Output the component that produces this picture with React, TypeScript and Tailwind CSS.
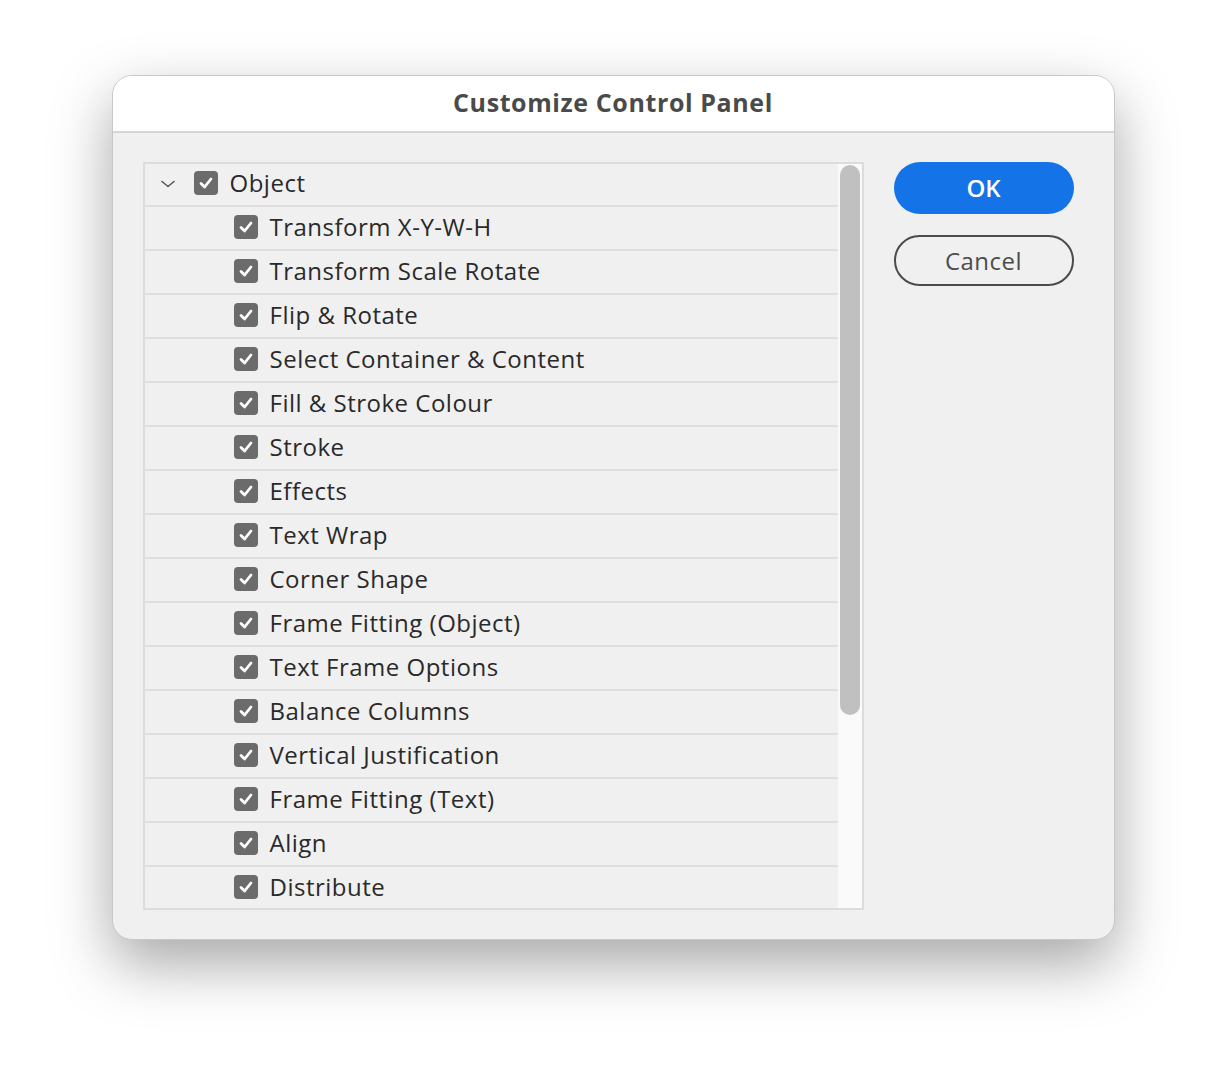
import React from 'react';

const items = [
  'Transform X-Y-W-H',
  'Transform Scale Rotate',
  'Flip & Rotate',
  'Select Container & Content',
  'Fill & Stroke Colour',
  'Stroke',
  'Effects',
  'Text Wrap',
  'Corner Shape',
  'Frame Fitting (Object)',
  'Text Frame Options',
  'Balance Columns',
  'Vertical Justification',
  'Frame Fitting (Text)',
  'Align',
  'Distribute',
];

const CheckBox: React.FC = () => (
  <span className="flex h-6 w-6 shrink-0 items-center justify-center rounded-[4px] bg-[#6b6b6b]">
    <svg width="18" height="18" viewBox="0 0 18 18" fill="none">
      <path d="M4 9.5 L7.6 13 L14 5" stroke="#fff" strokeWidth="2.8" strokeLinecap="round" strokeLinejoin="round" />
    </svg>
  </span>
);

const Row: React.FC<{ label: string; top?: boolean }> = ({ label, top }) => (
  <div className={`flex ${top ? 'h-[43px]' : 'h-[44px]'} items-center border-b-2 border-[#dedede] pb-[3px]`}>
    {top ? (
      <>
        <span className="ml-[15px] mr-[18px] flex w-4 justify-center pt-[2px]">
          <svg width="16" height="10" viewBox="0 0 16 10" fill="none">
            <path d="M2 2.5 L8 7.5 L14 2.5" stroke="#5a5a5a" strokeWidth="1.6" strokeLinecap="round" strokeLinejoin="round" />
          </svg>
        </span>
        <CheckBox />
        <span className="ml-3 text-[24px] tracking-[0.5px] text-[#2a2a2a]">{label}</span>
      </>
    ) : (
      <>
        <span className="ml-[89px]" />
        <CheckBox />
        <span className="ml-3 text-[24px] tracking-[0.5px] text-[#2a2a2a]">{label}</span>
      </>
    )}
  </div>
);

export default function App() {
  return (
    <div
      className="flex min-h-[1088px] w-full justify-center bg-white pt-[75px]"
      style={{ fontFamily: '"Open Sans", "Noto Sans", sans-serif' }}
    >
      <div className="flex h-[865px] w-[1003px] flex-col overflow-hidden rounded-[20px] border border-[#c8c8c8] bg-[#f0f0f0] shadow-[0_24px_60px_rgba(0,0,0,0.35)]">
        <div className="flex h-[57px] shrink-0 items-center justify-center border-b-2 border-[#d6d6d6] bg-white pb-[2px]">
          <h1 className="text-[25px] font-bold tracking-[0.6px] text-[#4a4a4a]">Customize Control Panel</h1>
        </div>
        <div className="flex gap-[30px] pl-[30px] pt-[29px]">
          <div className="flex h-[748px] w-[721px] overflow-hidden border-2 border-[#dcdcdc]">
            <div className="flex-1">
              <Row label="Object" top />
              {items.map((item) => (
                <Row key={item} label={item} />
              ))}
            </div>
            <div className="w-[24px] shrink-0 bg-[#fafafa] px-[2px] pt-[1px]">
              <div className="h-[550px] rounded-full bg-[#c0c0c0]" />
            </div>
          </div>
          <div className="flex w-[180px] flex-col gap-[21px]">
            <button className="h-[52px] rounded-full bg-[#1473e6] text-[24px] font-semibold text-white">OK</button>
            <button className="h-[51px] rounded-full border-2 border-[#4b4b4b] text-[24px] tracking-[0.5px] text-[#4d4d4d]">Cancel</button>
          </div>
        </div>
      </div>
    </div>
  );
}
